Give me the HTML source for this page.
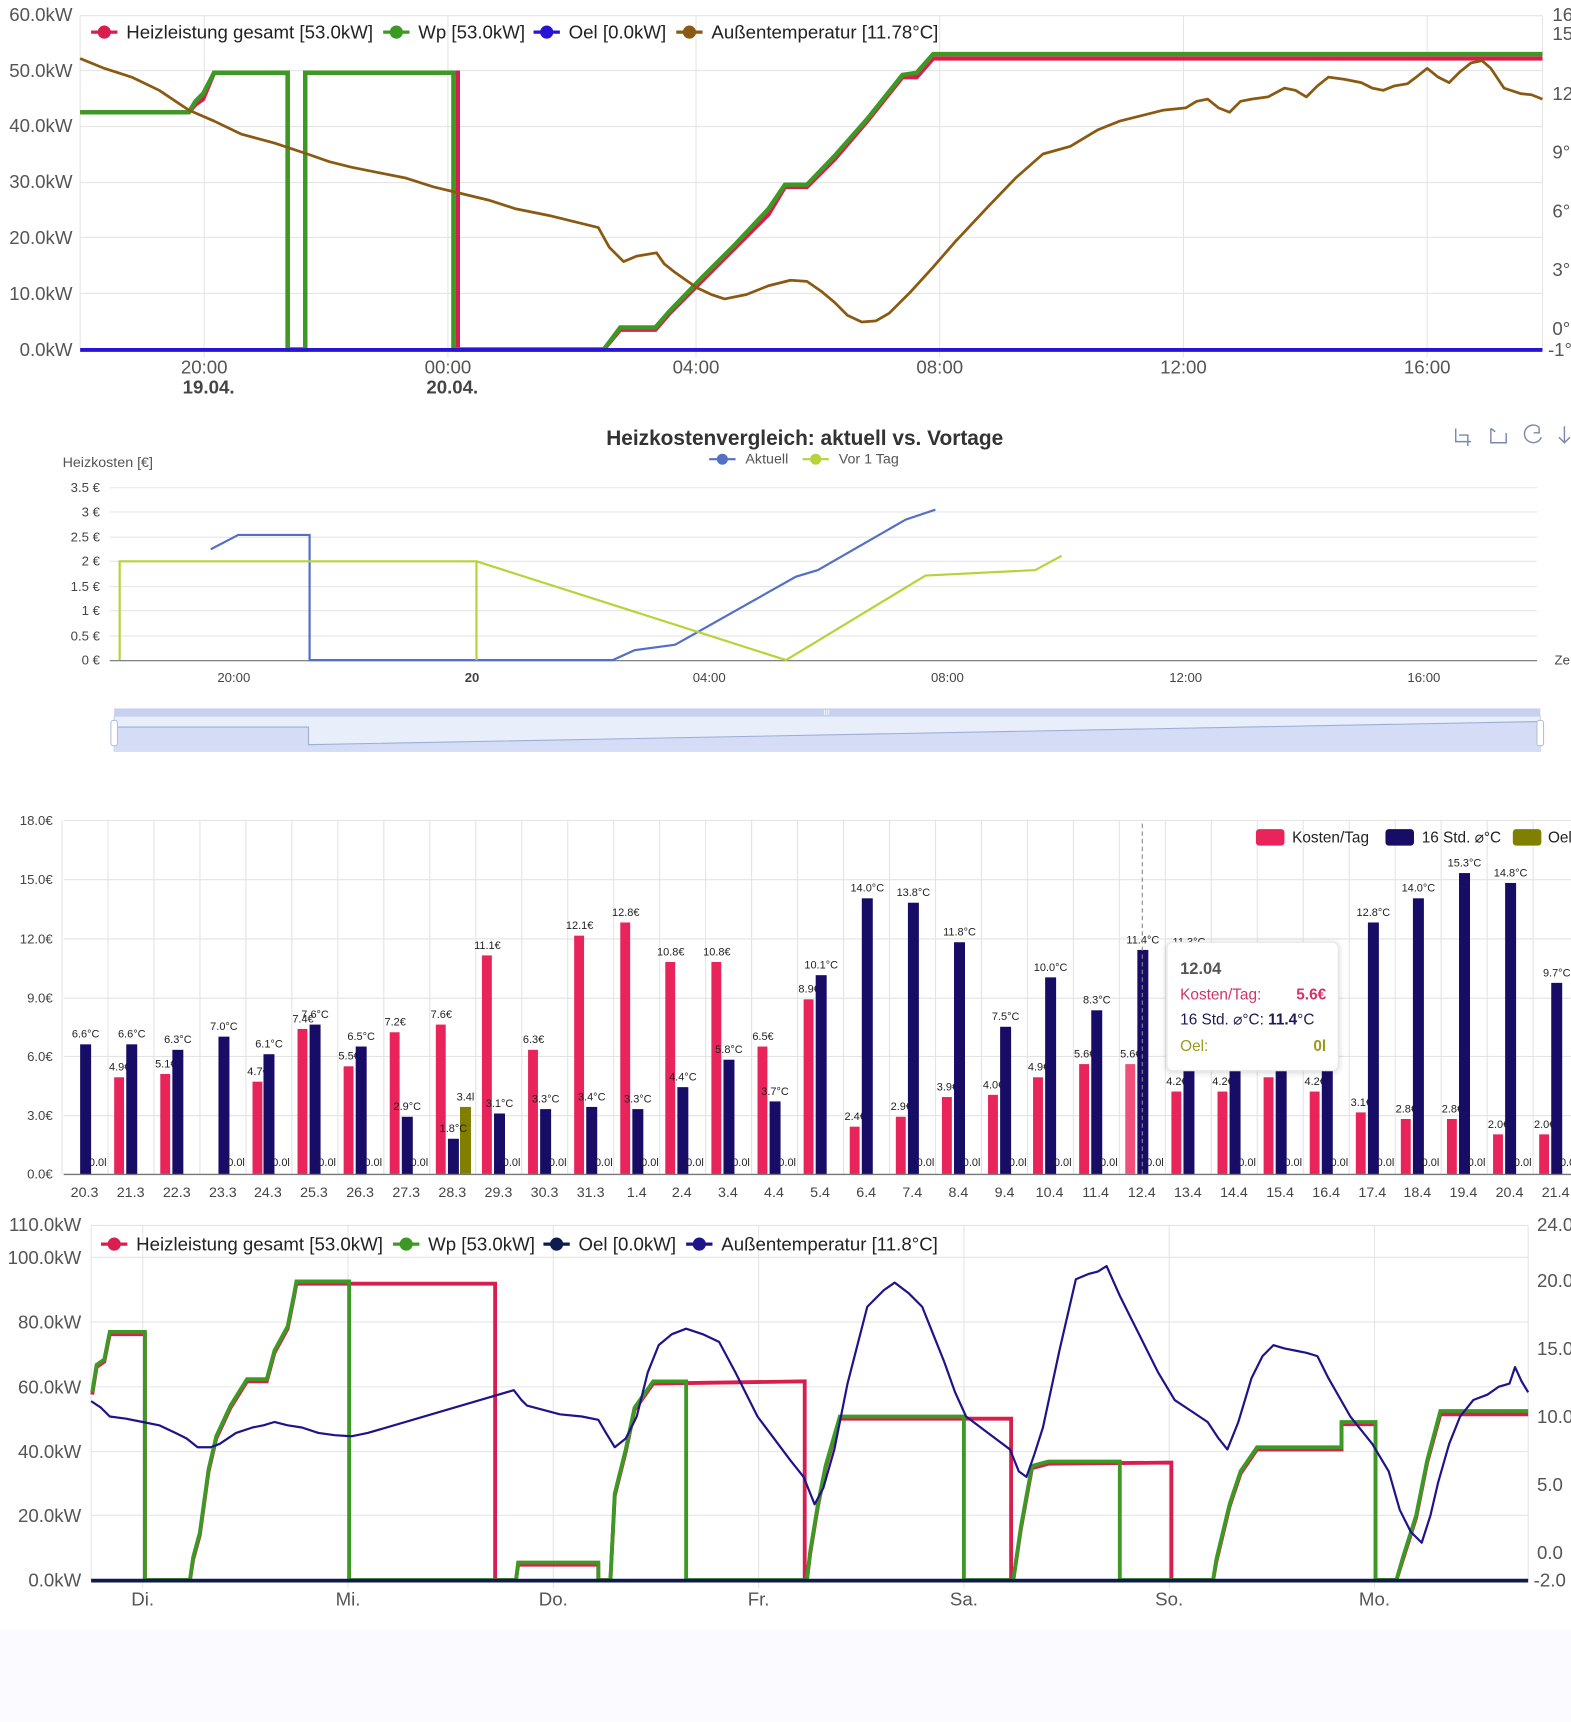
<!DOCTYPE html>
<html><head><meta charset="utf-8"><style>
html,body{margin:0;padding:0;background:#fff;}
svg{display:block;font-family:"Liberation Sans",sans-serif;}
</style></head><body>
<svg width="1571" height="1722" viewBox="0 0 1431 1568" xmlns="http://www.w3.org/2000/svg">
<defs>
<pattern id="vg3" x="56" y="0" width="41.875" height="10" patternUnits="userSpaceOnUse"><line x1="0.5" y1="0" x2="0.5" y2="10" stroke="#e3e3e3" stroke-width="1"/></pattern>
<filter id="sh" x="-20%" y="-20%" width="140%" height="140%"><feDropShadow dx="0" dy="1" stdDeviation="3" flood-color="#000" flood-opacity="0.18"/></filter>
</defs>
<rect x="0" y="1484" width="1431" height="84" fill="#fbfaff"/>

<!-- ===== CHART 1 ===== -->
<g stroke="#e5e5e5" stroke-width="1">
<line x1="73" y1="14" x2="1405" y2="14"/><line x1="73" y1="64" x2="1405" y2="64"/><line x1="73" y1="115" x2="1405" y2="115"/><line x1="73" y1="166" x2="1405" y2="166"/><line x1="73" y1="216" x2="1405" y2="216"/><line x1="73" y1="267" x2="1405" y2="267"/>
<line x1="186" y1="14" x2="186" y2="325"/><line x1="408" y1="14" x2="408" y2="325"/><line x1="634" y1="14" x2="634" y2="325"/><line x1="856" y1="14" x2="856" y2="325"/><line x1="1078" y1="14" x2="1078" y2="325"/><line x1="1300" y1="14" x2="1300" y2="325"/>
<line x1="73" y1="14" x2="73" y2="318"/><line x1="1405" y1="14" x2="1405" y2="318"/>
</g>
<g font-size="17" fill="#555" text-anchor="end">
<text x="66" y="19">60.0kW</text><text x="66" y="70">50.0kW</text><text x="66" y="120">40.0kW</text><text x="66" y="171">30.0kW</text><text x="66" y="222">20.0kW</text><text x="66" y="273">10.0kW</text><text x="66" y="324">0.0kW</text>
</g>
<g font-size="17" fill="#555">
<text x="1414" y="19">16</text><text x="1414" y="36">15</text><text x="1414" y="91">12</text><text x="1414" y="144">9°</text><text x="1414" y="198">6°</text><text x="1414" y="251">3°</text><text x="1414" y="305">0°</text><text x="1410" y="324">-1°</text>
</g>
<g font-size="17" fill="#555" text-anchor="middle">
<text x="186" y="340">20:00</text><text x="408" y="340">00:00</text><text x="634" y="340">04:00</text><text x="856" y="340">08:00</text><text x="1078" y="340">12:00</text><text x="1300" y="340">16:00</text>
<text x="190" y="358" font-weight="bold" fill="#444">19.04.</text><text x="412" y="358" font-weight="bold" fill="#444">20.04.</text>
</g>
<polyline fill="none" stroke="#d81e4e" stroke-width="4" points="73,102 172,102 178,95 185,90 195,66 262,66 262,318 278,318 278,66 417,66 417,318 550,318 565,300 597,300 610,285 640,255 670,225 700,195 715,170 735,170 760,145 790,110 822,70 835,70 850,53 1405,53"/>
<polyline fill="none" stroke="#3c9a24" stroke-width="4" points="73,102 172,102 178,92 185,85 195,66 262,66 262,318 278,318 278,66 413,66 413,318 550,318 565,298 597,298 610,283 640,252 670,222 700,190 715,168 735,168 760,142 790,108 822,68 835,66 850,49 1405,49"/>
<line x1="73" y1="318.5" x2="1405" y2="318.5" stroke="#2914d6" stroke-width="3.5"/>
<polyline fill="none" stroke="#8a5a12" stroke-width="2.5" stroke-linejoin="round" points="73,53 95,62 120,70 145,82 172,100 195,110 220,122 250,130 280,140 300,147 320,152 345,157 370,162 395,170 420,176 445,182 470,190 500,196 545,207 555,225 568,238 580,233 598,230 605,240 615,248 625,255 635,262 648,268 660,272 680,268 700,260 720,255 735,256 748,265 760,275 772,287 785,293 798,292 810,285 830,265 850,243 870,220 900,188 925,162 950,140 975,133 1000,118 1020,110 1040,105 1060,100 1080,98 1090,92 1100,90 1110,98 1120,102 1130,92 1140,90 1155,88 1170,80 1180,82 1190,88 1200,78 1210,70 1225,72 1240,75 1250,80 1260,82 1270,78 1282,76 1290,70 1300,62 1310,70 1320,75 1330,65 1340,57 1350,55 1358,62 1370,80 1385,85 1395,86 1405,90"/>
<!-- legend 1 -->
<g font-size="17" fill="#222">
<line x1="83" y1="29" x2="107" y2="29" stroke="#d81e4e" stroke-width="3"/><circle cx="95" cy="29" r="6" fill="#d81e4e"/><text x="115" y="35">Heizleistung gesamt [53.0kW]</text>
<line x1="349" y1="29" x2="373" y2="29" stroke="#3c9a24" stroke-width="3"/><circle cx="361" cy="29" r="6" fill="#3c9a24"/><text x="381" y="35">Wp [53.0kW]</text>
<line x1="486" y1="29" x2="510" y2="29" stroke="#2914d6" stroke-width="3"/><circle cx="498" cy="29" r="6" fill="#2914d6"/><text x="518" y="35">Oel [0.0kW]</text>
<line x1="616" y1="29" x2="640" y2="29" stroke="#8a5a12" stroke-width="3"/><circle cx="628" cy="29" r="6" fill="#8a5a12"/><text x="648" y="35">Außentemperatur [11.78°C]</text>
</g>

<!-- ===== CHART 2 ===== -->
<text x="733" y="405" text-anchor="middle" font-size="19" font-weight="bold" fill="#333">Heizkostenvergleich: aktuell vs. Vortage</text>
<g font-size="13" fill="#555">
<line x1="646" y1="418" x2="670" y2="418" stroke="#5470c6" stroke-width="2"/><circle cx="658" cy="418" r="5" fill="#5470c6"/><text x="679" y="422">Aktuell</text>
<line x1="731" y1="418" x2="755" y2="418" stroke="#b6d33a" stroke-width="2"/><circle cx="743" cy="418" r="5" fill="#b6d33a"/><text x="764" y="422">Vor 1 Tag</text>
</g>
<g fill="none" stroke="#7a87b0" stroke-width="1.3">
<path d="M1326,390 v12 h14 M1329,396 h8 v10"/>
<path d="M1358,390 v13 h14 v-9 M1358,390 l4,3"/>
<path d="M1402,389 a8,8 0 1 0 2,9 M1402,389 v5 h-5"/>
<path d="M1425,388 v14 M1420,398 l5,5 5,-5"/>
</g>
<text x="57" y="425" font-size="13" fill="#555">Heizkosten [€]</text>
<g stroke="#e6e6e6" stroke-width="1">
<line x1="100" y1="444" x2="1400" y2="444"/><line x1="100" y1="466" x2="1400" y2="466"/><line x1="100" y1="489" x2="1400" y2="489"/><line x1="100" y1="511" x2="1400" y2="511"/><line x1="100" y1="534" x2="1400" y2="534"/><line x1="100" y1="556" x2="1400" y2="556"/><line x1="100" y1="579" x2="1400" y2="579"/>
</g>
<line x1="100" y1="601.5" x2="1400" y2="601.5" stroke="#6e7079" stroke-width="1"/>
<g font-size="12" fill="#444" text-anchor="end">
<text x="91" y="448">3.5 €</text><text x="91" y="470">3 €</text><text x="91" y="493">2.5 €</text><text x="91" y="515">2 €</text><text x="91" y="538">1.5 €</text><text x="91" y="560">1 €</text><text x="91" y="583">0.5 €</text><text x="91" y="605">0 €</text>
</g>
<g font-size="12" fill="#444" text-anchor="middle">
<text x="213" y="621">20:00</text><text x="430" y="621" font-weight="bold">20</text><text x="646" y="621">04:00</text><text x="863" y="621">08:00</text><text x="1080" y="621">12:00</text><text x="1297" y="621">16:00</text>
</g>
<text x="1416" y="605" font-size="12" fill="#444">Ze</text>
<polyline fill="none" stroke="#5470c6" stroke-width="2" points="192,500 217,487 282,487 282,601 558,601 578,592 615,587 725,525 745,519 825,473 852,464"/>
<polyline fill="none" stroke="#b6d33a" stroke-width="2" points="109,601 109,511 434,511 434,601"/>
<polyline fill="none" stroke="#b6d33a" stroke-width="2" points="434,511 716,601 843,524 943,519 967,506"/>
<!-- datazoom -->
<rect x="104" y="645" width="1299" height="7" fill="#c7d1ef"/>
<text x="753" y="651" font-size="7" fill="#fff" text-anchor="middle">III</text>
<rect x="104" y="652" width="1299" height="32" fill="#e9eefb" stroke="#c7d1ef"/>
<path d="M105,662 L281,662 L281,678 L1402,657 L1402,684 L105,684 Z" fill="#d4ddf5" />
<polyline fill="none" stroke="#9eadd6" stroke-width="1" points="105,662 281,662 281,678 1402,657"/>
<rect x="101" y="656" width="6" height="23" rx="2" fill="#fff" stroke="#b6bfd9"/>
<rect x="1400" y="656" width="6" height="23" rx="2" fill="#fff" stroke="#b6bfd9"/>

<!-- ===== CHART 3 ===== -->
<rect x="56" y="747" width="1375" height="322" fill="url(#vg3)"/>
<g stroke="#e3e3e3" stroke-width="1">
<line x1="58" y1="747" x2="1431" y2="747"/><line x1="58" y1="801" x2="1431" y2="801"/><line x1="58" y1="855" x2="1431" y2="855"/><line x1="58" y1="909" x2="1431" y2="909"/><line x1="58" y1="962" x2="1431" y2="962"/><line x1="58" y1="1016" x2="1431" y2="1016"/>
</g>
<line x1="58" y1="1069.5" x2="1431" y2="1069.5" stroke="#777" stroke-width="1.2"/>
<g font-size="12" fill="#444" text-anchor="end">
<text x="48" y="751">18.0€</text><text x="48" y="805">15.0€</text><text x="48" y="859">12.0€</text><text x="48" y="913">9.0€</text><text x="48" y="966">6.0€</text><text x="48" y="1020">3.0€</text><text x="48" y="1073">0.0€</text>
</g>
<g font-size="13" fill="#444" text-anchor="middle">
<text x="77" y="1090">20.3</text><text x="119" y="1090">21.3</text><text x="161" y="1090">22.3</text><text x="203" y="1090">23.3</text><text x="244" y="1090">24.3</text><text x="286" y="1090">25.3</text><text x="328" y="1090">26.3</text><text x="370" y="1090">27.3</text><text x="412" y="1090">28.3</text><text x="454" y="1090">29.3</text><text x="496" y="1090">30.3</text><text x="538" y="1090">31.3</text><text x="580" y="1090">1.4</text><text x="621" y="1090">2.4</text><text x="663" y="1090">3.4</text><text x="705" y="1090">4.4</text><text x="747" y="1090">5.4</text><text x="789" y="1090">6.4</text><text x="831" y="1090">7.4</text><text x="873" y="1090">8.4</text><text x="915" y="1090">9.4</text><text x="956" y="1090">10.4</text><text x="998" y="1090">11.4</text><text x="1040" y="1090">12.4</text><text x="1082" y="1090">13.4</text><text x="1124" y="1090">14.4</text><text x="1166" y="1090">15.4</text><text x="1208" y="1090">16.4</text><text x="1250" y="1090">17.4</text><text x="1291" y="1090">18.4</text><text x="1333" y="1090">19.4</text><text x="1375" y="1090">20.4</text><text x="1417" y="1090">21.4</text>
</g>
<!-- pink bars -->
<g fill="#e8245b">
<rect x="104" y="981" width="9" height="88"/><rect x="146" y="978" width="9" height="91"/><rect x="230" y="985" width="9" height="84"/><rect x="271" y="937" width="9" height="132"/><rect x="313" y="971" width="9" height="98"/><rect x="355" y="940" width="9" height="129"/><rect x="397" y="933" width="9" height="136"/><rect x="439" y="870" width="9" height="199"/><rect x="481" y="956" width="9" height="113"/><rect x="523" y="852" width="9" height="217"/><rect x="565" y="840" width="9" height="229"/><rect x="606" y="876" width="9" height="193"/><rect x="648" y="876" width="9" height="193"/><rect x="690" y="953" width="9" height="116"/><rect x="732" y="910" width="9" height="159"/><rect x="774" y="1026" width="9" height="43"/><rect x="816" y="1017" width="9" height="52"/><rect x="858" y="999" width="9" height="70"/><rect x="900" y="997" width="9" height="72"/><rect x="941" y="981" width="9" height="88"/><rect x="983" y="969" width="9" height="100"/><rect x="1025" y="969" width="9" height="100" fill="#f0507a"/><rect x="1067" y="994" width="9" height="75"/><rect x="1109" y="994" width="9" height="75"/><rect x="1151" y="981" width="9" height="88"/><rect x="1193" y="994" width="9" height="75"/><rect x="1235" y="1013" width="9" height="56"/><rect x="1276" y="1019" width="9" height="50"/><rect x="1318" y="1019" width="9" height="50"/><rect x="1360" y="1033" width="9" height="36"/><rect x="1402" y="1033" width="9" height="36"/>
</g>
<g font-size="10" fill="#222" text-anchor="middle">
<text x="109" y="975">4.9€</text><text x="151" y="972">5.1€</text><text x="235" y="979">4.7€</text><text x="276" y="931">7.4€</text><text x="318" y="965">5.5€</text><text x="360" y="934">7.2€</text><text x="402" y="927">7.6€</text><text x="444" y="864">11.1€</text><text x="486" y="950">6.3€</text><text x="528" y="846">12.1€</text><text x="570" y="834">12.8€</text><text x="611" y="870">10.8€</text><text x="653" y="870">10.8€</text><text x="695" y="947">6.5€</text><text x="737" y="904">8.9€</text><text x="779" y="1020">2.4€</text><text x="821" y="1011">2.9€</text><text x="863" y="993">3.9€</text><text x="905" y="991">4.0€</text><text x="946" y="975">4.9€</text><text x="988" y="963">5.6€</text><text x="1030" y="963">5.6€</text><text x="1072" y="988">4.2€</text><text x="1114" y="988">4.2€</text><text x="1156" y="975">4.9€</text><text x="1198" y="988">4.2€</text><text x="1240" y="1007">3.1€</text><text x="1281" y="1013">2.8€</text><text x="1323" y="1013">2.8€</text><text x="1365" y="1027">2.0€</text><text x="1407" y="1027">2.0€</text>
</g>
<!-- navy bars -->
<g fill="#170c66">
<rect x="73" y="951" width="10" height="118"/><rect x="115" y="951" width="10" height="118"/><rect x="157" y="956" width="10" height="113"/><rect x="199" y="944" width="10" height="125"/><rect x="240" y="960" width="10" height="109"/><rect x="282" y="933" width="10" height="136"/><rect x="324" y="953" width="10" height="116"/><rect x="366" y="1017" width="10" height="52"/><rect x="408" y="1037" width="10" height="32"/><rect x="450" y="1014" width="10" height="55"/><rect x="492" y="1010" width="10" height="59"/><rect x="534" y="1008" width="10" height="61"/><rect x="576" y="1010" width="10" height="59"/><rect x="617" y="990" width="10" height="79"/><rect x="659" y="965" width="10" height="104"/><rect x="701" y="1003" width="10" height="66"/><rect x="743" y="888" width="10" height="181"/><rect x="785" y="818" width="10" height="251"/><rect x="827" y="822" width="10" height="247"/><rect x="869" y="858" width="10" height="211"/><rect x="911" y="935" width="10" height="134"/><rect x="952" y="890" width="10" height="179"/><rect x="994" y="920" width="10" height="149"/><rect x="1036" y="865" width="10" height="204"/><rect x="1078" y="867" width="10" height="202"/><rect x="1120" y="872" width="10" height="197"/><rect x="1162" y="863" width="10" height="206"/><rect x="1204" y="860" width="10" height="209"/><rect x="1246" y="840" width="10" height="229"/><rect x="1287" y="818" width="10" height="251"/><rect x="1329" y="795" width="10" height="274"/><rect x="1371" y="804" width="10" height="265"/><rect x="1413" y="895" width="10" height="174"/>
</g>
<rect x="419" y="1008" width="10" height="61" fill="#807f00"/>
<text x="424" y="1002" font-size="10" fill="#222" text-anchor="middle">3.4l</text>
<g font-size="10" fill="#222" text-anchor="middle">
<text x="78" y="945">6.6°C</text><text x="120" y="945">6.6°C</text><text x="162" y="950">6.3°C</text><text x="204" y="938">7.0°C</text><text x="245" y="954">6.1°C</text><text x="287" y="927">7.6°C</text><text x="329" y="947">6.5°C</text><text x="371" y="1011">2.9°C</text><text x="413" y="1031">1.8°C</text><text x="455" y="1008">3.1°C</text><text x="497" y="1004">3.3°C</text><text x="539" y="1002">3.4°C</text><text x="581" y="1004">3.3°C</text><text x="622" y="984">4.4°C</text><text x="664" y="959">5.8°C</text><text x="706" y="997">3.7°C</text><text x="748" y="882">10.1°C</text><text x="790" y="812">14.0°C</text><text x="832" y="816">13.8°C</text><text x="874" y="852">11.8°C</text><text x="916" y="929">7.5°C</text><text x="957" y="884">10.0°C</text><text x="999" y="914">8.3°C</text><text x="1041" y="859">11.4°C</text><text x="1083" y="861">11.3°C</text><text x="1251" y="834">12.8°C</text><text x="1292" y="812">14.0°C</text><text x="1334" y="789">15.3°C</text><text x="1376" y="798">14.8°C</text><text x="1418" y="889">9.7°C</text>
</g>
<g font-size="10" fill="#222" text-anchor="middle">
<text x="89" y="1062">0.0l</text><text x="215" y="1062">0.0l</text><text x="256" y="1062">0.0l</text><text x="298" y="1062">0.0l</text><text x="340" y="1062">0.0l</text><text x="382" y="1062">0.0l</text><text x="466" y="1062">0.0l</text><text x="508" y="1062">0.0l</text><text x="550" y="1062">0.0l</text><text x="592" y="1062">0.0l</text><text x="633" y="1062">0.0l</text><text x="675" y="1062">0.0l</text><text x="717" y="1062">0.0l</text><text x="843" y="1062">0.0l</text><text x="885" y="1062">0.0l</text><text x="927" y="1062">0.0l</text><text x="968" y="1062">0.0l</text><text x="1010" y="1062">0.0l</text><text x="1052" y="1062">0.0l</text><text x="1136" y="1062">0.0l</text><text x="1178" y="1062">0.0l</text><text x="1220" y="1062">0.0l</text><text x="1262" y="1062">0.0l</text><text x="1303" y="1062">0.0l</text><text x="1345" y="1062">0.0l</text><text x="1387" y="1062">0.0l</text><text x="1429" y="1062">0.0l</text>
</g>
<line x1="1040.5" y1="750" x2="1040.5" y2="1069" stroke="#888" stroke-width="1" stroke-dasharray="4,3"/>
<!-- legend 3 -->
<g font-size="14" fill="#222">
<rect x="1144" y="755" width="26" height="15" rx="3" fill="#e8245b"/><text x="1177" y="767">Kosten/Tag</text>
<rect x="1262" y="755" width="26" height="15" rx="3" fill="#170c66"/><text x="1295" y="767">16 Std. ⌀°C</text>
<rect x="1378" y="755" width="26" height="15" rx="3" fill="#807f00"/><text x="1410" y="767">Oel</text>
</g>
<!-- tooltip -->
<rect x="1063" y="858" width="156" height="117" rx="5" fill="#fff" stroke="#e5e5e5" filter="url(#sh)"/>
<text x="1075" y="887" font-size="15" font-weight="bold" fill="#555">12.04</text>
<text x="1075" y="910" font-size="14" fill="#d1336a">Kosten/Tag:</text><text x="1208" y="910" font-size="14" font-weight="bold" fill="#d1336a" text-anchor="end">5.6€</text>
<text x="1075" y="933" font-size="14" fill="#1f1a55">16 Std. ⌀°C: <tspan font-weight="bold">11.4</tspan>°C</text>
<text x="1075" y="957" font-size="14" fill="#9a9a20">Oel:</text><text x="1208" y="957" font-size="14" font-weight="bold" fill="#9a9a20" text-anchor="end">0l</text>

<!-- ===== CHART 4 ===== -->
<g stroke="#e5e5e5" stroke-width="1">
<line x1="83" y1="1116" x2="1392" y2="1116"/><line x1="83" y1="1145" x2="1392" y2="1145"/><line x1="83" y1="1204" x2="1392" y2="1204"/><line x1="83" y1="1263" x2="1392" y2="1263"/><line x1="83" y1="1322" x2="1392" y2="1322"/><line x1="83" y1="1380" x2="1392" y2="1380"/>
<line x1="130" y1="1116" x2="130" y2="1446"/><line x1="317" y1="1116" x2="317" y2="1446"/><line x1="504" y1="1116" x2="504" y2="1446"/><line x1="691" y1="1116" x2="691" y2="1446"/><line x1="878" y1="1116" x2="878" y2="1446"/><line x1="1065" y1="1116" x2="1065" y2="1446"/><line x1="1252" y1="1116" x2="1252" y2="1446"/>
<line x1="83" y1="1116" x2="83" y2="1439"/><line x1="1392" y1="1116" x2="1392" y2="1439"/>
</g>
<g font-size="17" fill="#555" text-anchor="end">
<text x="74" y="1121">110.0kW</text><text x="74" y="1151">100.0kW</text><text x="74" y="1210">80.0kW</text><text x="74" y="1269">60.0kW</text><text x="74" y="1328">40.0kW</text><text x="74" y="1386">20.0kW</text><text x="74" y="1445">0.0kW</text>
</g>
<g font-size="17" fill="#555">
<text x="1400" y="1121">24.0</text><text x="1400" y="1172">20.0</text><text x="1400" y="1234">15.0</text><text x="1400" y="1296">10.0</text><text x="1400" y="1358">5.0</text><text x="1400" y="1420">0.0</text><text x="1397" y="1445">-2.0</text>
</g>
<g font-size="17" fill="#555" text-anchor="middle">
<text x="130" y="1462">Di.</text><text x="317" y="1462">Mi.</text><text x="504" y="1462">Do.</text><text x="691" y="1462">Fr.</text><text x="878" y="1462">Sa.</text><text x="1065" y="1462">So.</text><text x="1252" y="1462">Mo.</text>
</g>
<polyline fill="none" stroke="#d81e4e" stroke-width="3.5" points="84,1270 88,1245 95,1240 100,1215 132,1215 132,1439 173,1439 176,1420 182,1398 190,1340 197,1310 210,1282 225,1258 243,1258 250,1232 262,1210 268,1180 270,1169 451,1169 451,1439 470,1439 472,1425 545,1425 545,1439 556,1439 560,1362 570,1322 578,1284 595,1260 733,1258 733,1439 735,1439 738,1415 745,1372 752,1337 765,1292 921,1292 921,1439 923,1439 930,1392 940,1337 955,1333 1067,1332 1067,1439 1105,1439 1108,1422 1120,1372 1130,1342 1145,1320 1222,1320 1222,1297 1253,1297 1253,1439 1272,1439 1278,1420 1290,1382 1300,1332 1312,1288 1392,1288"/>
<polyline fill="none" stroke="#3c9a24" stroke-width="3.5" points="84,1268 88,1243 95,1238 100,1213 132,1213 132,1439 173,1439 176,1418 182,1396 190,1338 197,1308 210,1280 225,1256 243,1256 250,1230 262,1208 268,1178 270,1167 318,1167 318,1439 470,1439 472,1423 545,1423 545,1439 556,1439 560,1360 570,1320 578,1282 595,1258 625,1258 625,1439 735,1439 738,1413 745,1370 752,1335 765,1290 878,1290 878,1439 923,1439 930,1390 940,1335 955,1331 1020,1331 1020,1439 1105,1439 1108,1420 1120,1370 1130,1340 1145,1318 1222,1318 1222,1295 1253,1295 1253,1439 1272,1439 1278,1418 1290,1380 1300,1330 1312,1285 1392,1285"/>
<line x1="83" y1="1439.5" x2="1392" y2="1439.5" stroke="#0f1a4d" stroke-width="3.5"/>
<polyline fill="none" stroke="#1f138a" stroke-width="2" stroke-linejoin="round" points="83,1276 92,1282 100,1290 115,1292 130,1295 145,1298 160,1305 170,1310 180,1318 192,1318 200,1315 215,1305 230,1300 240,1298 250,1295 262,1298 275,1300 290,1305 305,1307 320,1308 335,1305 468,1266 475,1275 480,1280 495,1284 510,1288 530,1290 545,1293 552,1305 560,1318 570,1310 580,1290 590,1250 600,1225 612,1215 625,1210 640,1215 655,1222 670,1250 690,1290 705,1310 720,1330 732,1345 742,1370 750,1355 760,1320 772,1260 790,1190 805,1175 815,1168 828,1178 840,1190 850,1215 860,1240 870,1268 880,1290 900,1305 920,1320 928,1340 935,1345 942,1325 950,1300 965,1230 980,1165 992,1160 1000,1158 1008,1153 1020,1180 1030,1200 1040,1220 1055,1250 1070,1275 1085,1285 1100,1295 1110,1310 1118,1320 1128,1295 1140,1255 1150,1235 1160,1225 1170,1228 1180,1230 1190,1232 1200,1235 1210,1255 1230,1290 1250,1315 1265,1340 1275,1375 1285,1395 1295,1405 1303,1380 1310,1350 1320,1315 1330,1290 1342,1275 1355,1270 1365,1263 1375,1260 1380,1245 1386,1258 1392,1268"/>
<!-- legend 4 -->
<g font-size="17" fill="#222">
<line x1="92" y1="1133" x2="116" y2="1133" stroke="#d81e4e" stroke-width="3"/><circle cx="104" cy="1133" r="6" fill="#d81e4e"/><text x="124" y="1139">Heizleistung gesamt [53.0kW]</text>
<line x1="358" y1="1133" x2="382" y2="1133" stroke="#3c9a24" stroke-width="3"/><circle cx="370" cy="1133" r="6" fill="#3c9a24"/><text x="390" y="1139">Wp [53.0kW]</text>
<line x1="495" y1="1133" x2="519" y2="1133" stroke="#0f1a4d" stroke-width="3"/><circle cx="507" cy="1133" r="6" fill="#0f1a4d"/><text x="527" y="1139">Oel [0.0kW]</text>
<line x1="625" y1="1133" x2="649" y2="1133" stroke="#1f138a" stroke-width="3"/><circle cx="637" cy="1133" r="6" fill="#1f138a"/><text x="657" y="1139">Außentemperatur [11.8°C]</text>
</g>
</svg>
</body></html>
